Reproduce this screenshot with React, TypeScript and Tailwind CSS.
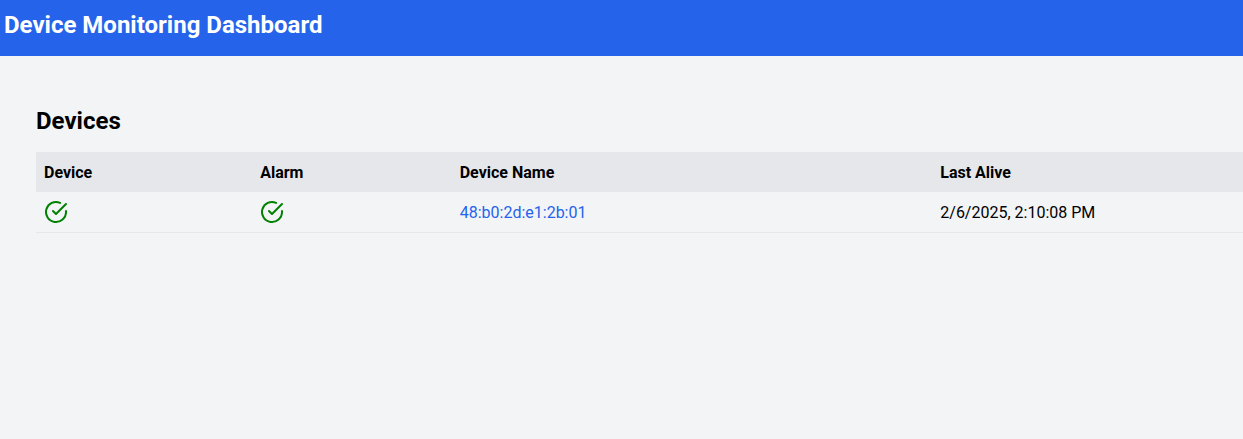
import { FiCheckCircle } from "react-icons/fi";

const devices = [{ name: "48:b0:2d:e1:2b:01", lastAlive: "2/6/2025, 2:10:08 PM" }];

const columns = "grid grid-cols-[216.2px_199.5px_480.6px_1fr]";
const textCell = "px-2 pt-[9px] pb-[7px]";

export default function App() {
  return (
    <div className="flex min-h-screen flex-col overflow-hidden bg-gray-100 font-['Roboto',sans-serif] text-black">
      <header className="h-14 bg-[#2563eb] px-1 pt-[9px] text-white">
        <h1 className="text-2xl font-bold">Device Monitoring Dashboard</h1>
      </header>
      <main className="pl-9 pt-[49px]">
        <h2 className="mb-[15px] text-2xl font-bold">Devices</h2>
        <div className="text-base">
          <div className={`${columns} bg-[#e5e7eb] font-bold`}>
            <div className={textCell}>Device</div>
            <div className={textCell}>Alarm</div>
            <div className={textCell}>Device Name</div>
            <div className={textCell}>Last Alive</div>
          </div>
          {devices.map((d) => (
            <div key={d.name} className={`${columns} border-b border-[#e5e7eb]`}>
              <div className="p-2"><FiCheckCircle size={24} color="green" /></div>
              <div className="p-2"><FiCheckCircle size={24} color="green" /></div>
              <div className={textCell}>
                <a href="#" className="text-[#2563eb]">{d.name}</a>
              </div>
              <div className={textCell}>{d.lastAlive}</div>
            </div>
          ))}
        </div>
      </main>
    </div>
  );
}
